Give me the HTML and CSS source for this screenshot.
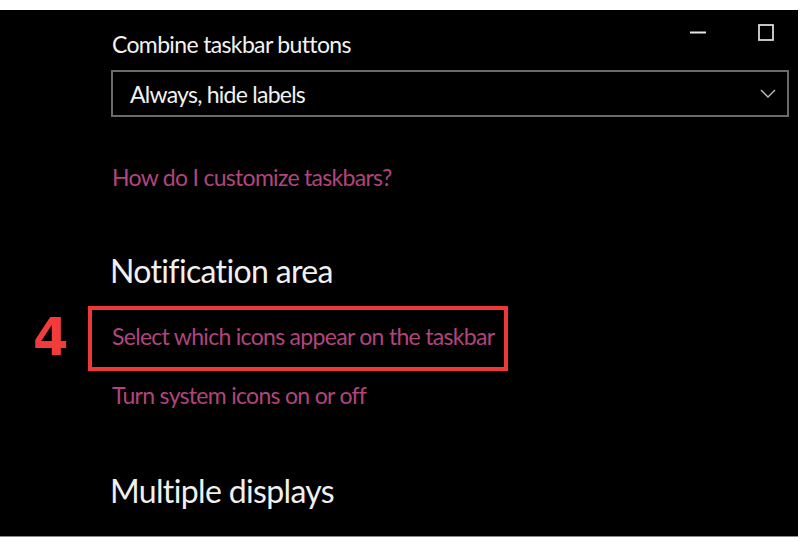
FILE: index.html
```html
<!DOCTYPE html>
<html lang="en">
<head>
<meta charset="utf-8">
<link rel="stylesheet" href="styles.css">
<title>Taskbar settings</title>
</head>
<body>
<div class="screen">
  <div class="content">
    <div class="header-row">
      <div class="label">Combine taskbar buttons</div>
      <div class="window-controls">
        <span class="ctl ctl-min"><svg width="16" height="16" viewBox="0 0 16 16"><path d="M0 8.5h16" stroke="#e6e6e6" stroke-width="2"/></svg></span>
        <span class="ctl ctl-max"><svg width="16" height="17" viewBox="0 0 16 17"><rect x="1" y="1" width="14" height="15" fill="none" stroke="#e6e6e6" stroke-width="1.7"/></svg></span>
      </div>
    </div>
    <div class="dropdown">
      <span class="dropdown-value">Always, hide labels</span>
      <svg class="chevron" width="16" height="9" viewBox="0 0 16 9"><path d="M1 1l7 7 7-7" fill="none" stroke="#bdbdbd" stroke-width="1.4"/></svg>
    </div>
    <div class="link link-help">How do I customize taskbars?</div>
    <div class="section-title title-notif">Notification area</div>
    <div class="annotated">
      <span class="step-num">4</span>
      <div class="highlight-box">
        <span class="link">Select which icons appear on the taskbar</span>
      </div>
    </div>
    <div class="link link-system">Turn system icons on or off</div>
    <div class="section-title title-multi">Multiple displays</div>
  </div>
</div>
</body>
</html>
```
FILE: styles.css
```css
html, body {
  margin: 0;
  padding: 0;
  background: #ffffff;
}
body {
  width: 805px;
  height: 541px;
  overflow: hidden;
  font-family: "Lato", "Open Sans", sans-serif;
}
.screen {
  margin-top: 10px;
  width: 798px;
  height: 526px;
  background: #000000;
  border-bottom: 1px solid #8a8a8a;
  color: #f2f2f2;
  overflow: hidden;
}
.content {
  padding-left: 112px;
  padding-right: 9px;
  display: flex;
  flex-direction: column;
  align-items: flex-start;
}
.header-row {
  align-self: stretch;
  display: flex;
  justify-content: space-between;
  align-items: flex-start;
  margin-top: 19px;
}
.label {
  font-size: 23px;
  line-height: 30px;
  letter-spacing: -0.65px;
}
.window-controls {
  display: flex;
  gap: 52px;
  margin-top: -5px;
  margin-right: 15px;
}
.ctl {
  display: block;
  width: 16px;
}
.ctl svg { display: block; }
.dropdown {
  align-self: stretch;
  margin-top: 11px;
  margin-left: -1px;
  height: 43px;
  border: 2px solid #6a6a6a;
  display: flex;
  align-items: center;
  justify-content: space-between;
  padding: 0 11px 0 17px;
}
.dropdown-value {
  font-size: 23px;
  line-height: 30px;
  letter-spacing: -0.75px;
  margin-top: 1px;
}
.chevron { display: block; }
.link {
  font-size: 23px;
  line-height: 30px;
  letter-spacing: -0.7px;
  color: #b0457e;
}
.link-help { margin-top: 45px; }
.section-title {
  font-size: 32px;
  line-height: 40px;
  letter-spacing: -0.65px;
  margin-left: -2px;
  color: #f0f0f0;
}
.title-notif { margin-top: 59px; }
.annotated {
  position: relative;
  margin-top: 15px;
  margin-left: -24px;
}
.highlight-box {
  border: 4px solid #ef3838;
  padding: 11px 10px 16px 20px;
}
.step-num {
  position: absolute;
  left: -55px;
  top: 6px;
  font-family: "DejaVu Sans", sans-serif;
  font-weight: 700;
  font-size: 51px;
  line-height: 51px;
  letter-spacing: 0;
  color: #f23b3b;
}
.link-system { margin-top: 9px; }
.title-multi { margin-top: 61px; }
```
